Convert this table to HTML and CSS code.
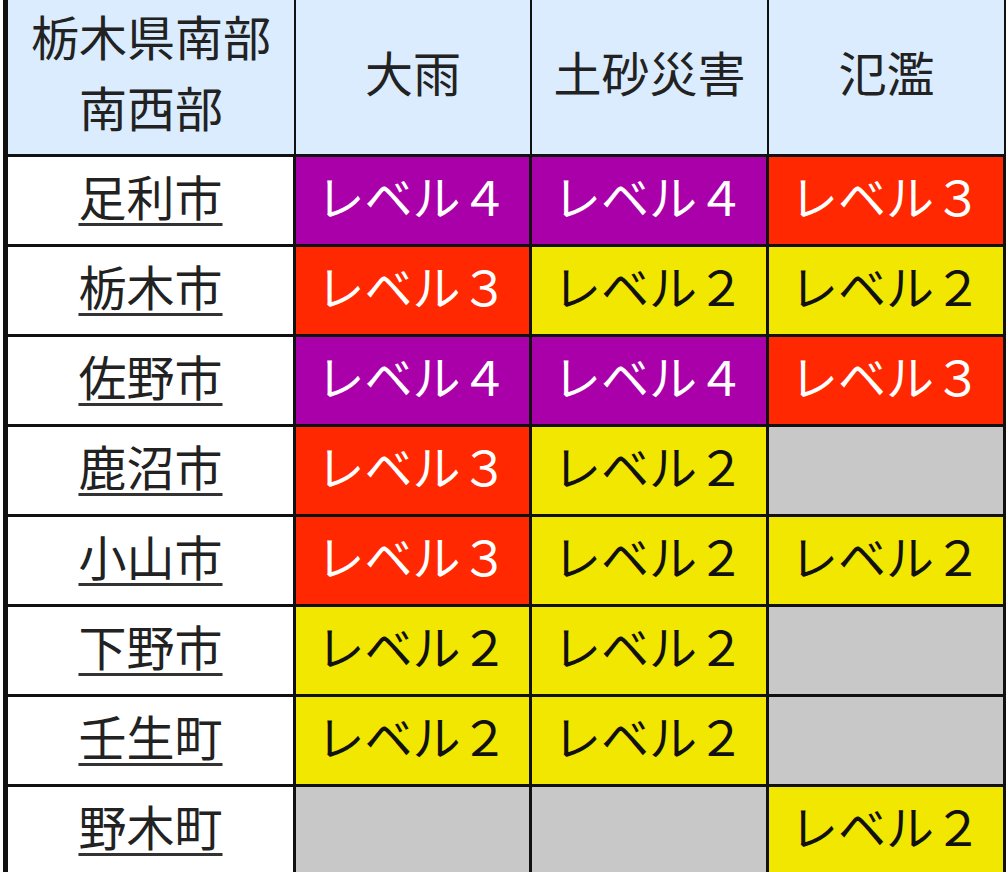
FILE: index.html
```html
<!DOCTYPE html>
<html lang="ja">
<head>
<meta charset="utf-8">
<title>警戒レベル</title>
<link rel="stylesheet" href="styles.css">
</head>
<body>
<table class="levels">
  <colgroup>
    <col class="c-area">
    <col class="c-a">
    <col class="c-b">
    <col class="c-c">
  </colgroup>
  <thead>
    <tr>
      <th class="head">栃木県南部<br>南西部</th>
      <th class="head">大雨</th>
      <th class="head">土砂災害</th>
      <th class="head">氾濫</th>
    </tr>
  </thead>
  <tbody>
    <tr>
      <td class="area"><a href="#">足利市</a></td>
      <td class="lv4">レベル４</td>
      <td class="lv4">レベル４</td>
      <td class="lv3">レベル３</td>
    </tr>
    <tr>
      <td class="area"><a href="#">栃木市</a></td>
      <td class="lv3">レベル３</td>
      <td class="lv2">レベル２</td>
      <td class="lv2">レベル２</td>
    </tr>
    <tr>
      <td class="area"><a href="#">佐野市</a></td>
      <td class="lv4">レベル４</td>
      <td class="lv4">レベル４</td>
      <td class="lv3">レベル３</td>
    </tr>
    <tr>
      <td class="area"><a href="#">鹿沼市</a></td>
      <td class="lv3">レベル３</td>
      <td class="lv2">レベル２</td>
      <td class="none"></td>
    </tr>
    <tr>
      <td class="area"><a href="#">小山市</a></td>
      <td class="lv3">レベル３</td>
      <td class="lv2">レベル２</td>
      <td class="lv2">レベル２</td>
    </tr>
    <tr>
      <td class="area"><a href="#">下野市</a></td>
      <td class="lv2">レベル２</td>
      <td class="lv2">レベル２</td>
      <td class="none"></td>
    </tr>
    <tr>
      <td class="area"><a href="#">壬生町</a></td>
      <td class="lv2">レベル２</td>
      <td class="lv2">レベル２</td>
      <td class="none"></td>
    </tr>
    <tr>
      <td class="area"><a href="#">野木町</a></td>
      <td class="none"></td>
      <td class="none"></td>
      <td class="lv2">レベル２</td>
    </tr>
  </tbody>
</table>
</body>
</html>
```

FILE: styles.css
```css
html, body {
  margin: 0;
  padding: 0;
  background: #ffffff;
}

body {
  padding-left: 3px;
  font-family: "Noto Sans CJK JP", "Noto Sans", sans-serif;
  color: #222222;
  overflow: hidden;
}

.levels {
  border-collapse: separate;
  border-spacing: 0;
  border-left: 5px solid #111111;
  table-layout: fixed;
  width: 1003px;
  font-size: 48px;
  font-weight: 400;
}

.c-area { width: 288px; }
.c-a { width: 236px; }
.c-b { width: 237px; }
.c-c { width: 237px; }

.levels th,
.levels td {
  border-right: 3px solid #111111;
  border-bottom: 3px solid #111111;
  text-align: center;
  vertical-align: middle;
  padding: 0;
  white-space: nowrap;
}

.levels th.head {
  background: #daecfd;
  font-weight: 400;
  height: 142px;
  line-height: 71px;
  padding-bottom: 12px;
  color: #222222;
  border-right-width: 2px;
}

.levels td {
  height: 75px;
  line-height: 60px;
  padding-bottom: 12px;
}

.area {
  background: #ffffff;
}

.area a {
  color: #222222;
  text-decoration: underline;
  text-decoration-thickness: 3px;
  text-underline-offset: 7px;
  text-decoration-color: #333333;
}

.lv4 {
  background: #aa00aa;
  color: #ffffff;
}

.lv3 {
  background: #ff2800;
  color: #ffffff;
}

.lv2 {
  background: #f2e700;
  color: #111111;
}

.none {
  background: #c8c8c8;
}
```
